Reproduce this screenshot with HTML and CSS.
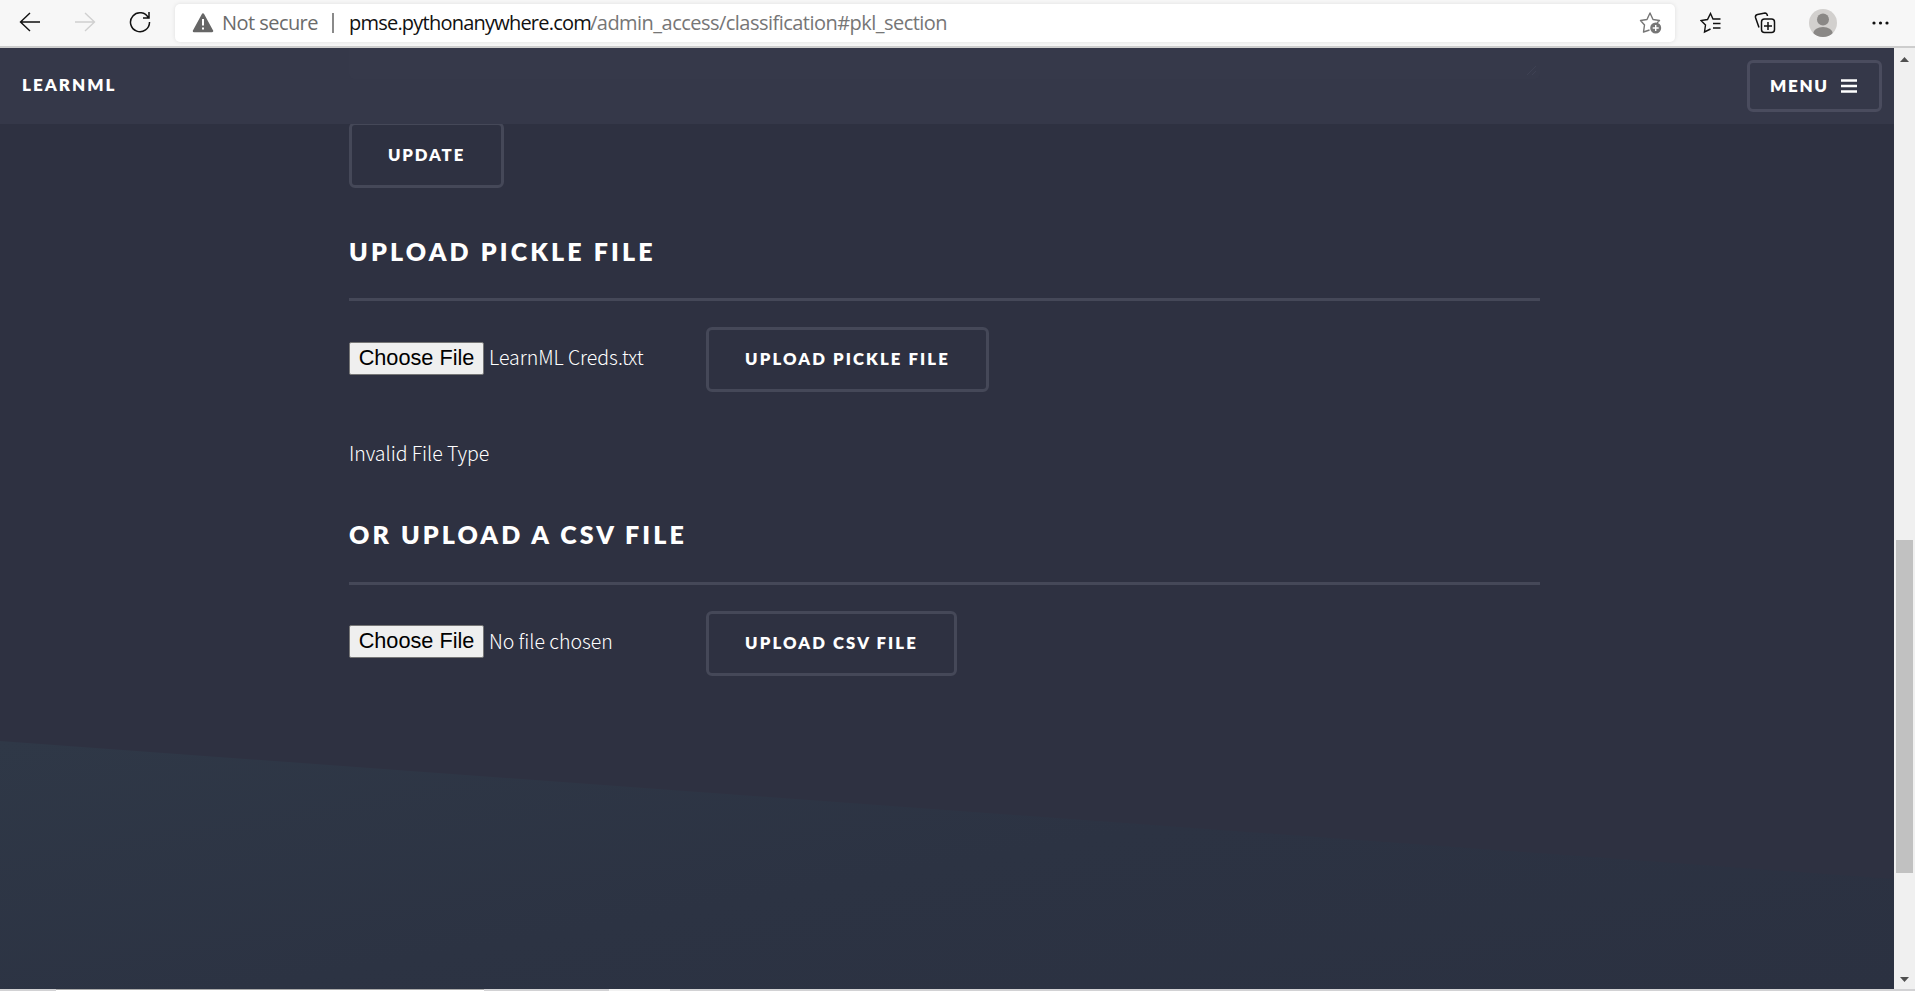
FILE: index.html
```html
<!DOCTYPE html>
<html lang="en">
<head>
<meta charset="utf-8">
<title>LearnML</title>
<link rel="stylesheet" href="styles.css">
</head>
<body>
<div class="toolbar">
  <div class="nav">
    <svg class="icon" width="22" height="22" viewBox="0 0 22 22"><path d="M21 11H1.500M11 2 1.500 11 11 20" stroke="#111" stroke-width="1.400"/></svg>
    <svg class="icon" width="22" height="22" viewBox="0 0 22 22"><path d="M1 11h19.500M11 2l9.500 9L11 20" stroke="#d0d0d0" stroke-width="1.400"/></svg>
    <svg class="icon" width="22" height="22" viewBox="0 0 22 22"><path d="M19.500 7A9.500 9.500 0 1 0 20.500 11M20 1v6h-6" stroke="#111" stroke-width="1.500"/></svg>
  </div>
  <div class="address">
    <svg class="warn" width="22" height="20" viewBox="0 0 22 20"><path d="M11 1.500 20 18H2Z" fill="#666" stroke="#666" stroke-width="2.500" stroke-linejoin="round"/><path d="M11 6v6.500M11 14.500v2" stroke="#fff" stroke-width="2"/></svg>
    <span class="insecure">Not secure</span>
    <span class="divider"></span>
    <span class="host">pmse.pythonanywhere.com</span><span class="path">/admin_access/classification#pkl_section</span>
    <svg class="icon favorite" width="24" height="24" viewBox="0 0 24 24"><path d="M10.500 19 4.500 21l1-7L1.500 9.500l6.500-1L11 2l3 6.500 6.500 1L18 12" stroke="#767676" stroke-width="1.400" stroke-linejoin="round"/><circle cx="16.700" cy="17" r="5.500" fill="#767676"/><path d="M16.700 14v6M13.700 17h6" stroke="#fff" stroke-width="1.400"/></svg>
  </div>
  <div class="tools">
    <svg class="icon" width="22" height="22" viewBox="0 0 22 22"><path d="M10.500 17 4.500 20l1-7L1 8.500l6.500-1L10.500 1.500l2.500 5.500H20.500M13 11.500h7.500M13 16h7.500" stroke="#111" stroke-width="1.400"/></svg>
    <svg class="icon" width="22" height="22" viewBox="0 0 22 22"><rect x="7.500" y="7" width="13" height="13.500" rx="3" stroke="#111" stroke-width="1.500"/><path d="M14 10v8M10 14h8M5 15.500 1.500 5.500Q1 3 3.500 2.500L11 1q2 0 2.500 3" stroke="#111" stroke-width="1.500"/></svg>
    <svg class="avatar" width="28" height="28" viewBox="0 0 28 28"><clipPath id="disc"><circle cx="14" cy="14" r="14"/></clipPath><g clip-path="url(#disc)"><rect width="28" height="28" fill="#d2d0ce"/><g fill="#8a8886"><circle cx="14" cy="10.500" r="6"/><ellipse cx="14" cy="25" rx="10" ry="7"/></g></g></svg>
    <svg class="icon" width="18" height="6" viewBox="0 0 18 6"><g fill="#111"><circle cx="3" cy="3" r="1.600"/><circle cx="9.500" cy="3" r="1.600"/><circle cx="16" cy="3" r="1.600"/></g></svg>
  </div>
</div>
<div class="viewport">
  <div class="page">
    <header class="header">
      <a class="logo">LearnML</a>
      <div class="ghost"><svg width="10" height="10" viewBox="0 0 10 10"><path d="M0 9 9 0M5 9l4-4" stroke="#3e4153" fill="none"/></svg></div>
      <a class="menu">Menu<svg width="16" height="14" viewBox="0 0 16 14"><path d="M0 1.500h16M0 7h16M0 12.500h16" stroke="#fff" stroke-width="2.600"/></svg></a>
    </header>
    <main class="content">
      <a class="button update">Update</a>
      <h4 class="title first">Upload Pickle File</h4>
      <div class="row">
        <div class="file"><span class="choose">Choose File</span><span class="name">LearnML Creds.txt</span></div>
        <a class="button pickle">Upload Pickle File</a>
      </div>
      <p class="message">Invalid File Type</p>
      <h4 class="title second">Or Upload a CSV File</h4>
      <div class="row">
        <div class="file file-csv"><span class="choose">Choose File</span><span class="name">No file chosen</span></div>
        <a class="button csv">Upload CSV File</a>
      </div>
    </main>
    <div class="wedge"></div>
  </div>
  <div class="scrollbar">
    <svg width="9" height="5" viewBox="0 0 9 5"><path d="M0 5 4.500 0 9 5Z" fill="#505050"/></svg>
    <div class="thumb"></div>
    <svg width="9" height="5" viewBox="0 0 9 5"><path d="M0 0h9L4.500 5Z" fill="#505050"/></svg>
  </div>
</div>
<div class="taskbar"><span class="search"></span><span class="task"></span></div>
</body>
</html>
```

FILE: styles.css
```css
* { box-sizing: border-box; }
body {
  margin: 0;
  width: 1915px;
  height: 991px;
  overflow: hidden;
  display: flex;
  flex-direction: column;
  background: #2e3141;
}
svg { flex: none; display: block; }
.icon { fill: none; }
.toolbar {
  height: 48px;
  flex: none;
  display: flex;
  align-items: flex-start;
  background: #f7f7f7;
  border-bottom: 2px solid #cdcdcd;
}
.nav { display: flex; gap: 33px; padding: 11px 0 0 19px; width: 175px; }
.address {
  width: 1500px;
  height: 38px;
  margin-top: 4px;
  padding-left: 17px;
  display: flex;
  align-items: center;
  background: #fff;
  border-radius: 5px;
  box-shadow: 0 0 4px rgba(0, 0, 0, .1);
  font: 20px/38px "Open Sans", sans-serif;
  white-space: pre;
}
.insecure { width: 110px; margin-left: 8px; color: #6b6b6b; letter-spacing: -.55px; }
.divider { width: 2px; height: 20px; background: #8a8a8a; }
.host { width: 241px; margin-left: 15px; color: #111; letter-spacing: -.78px; }
.path { color: #767676; letter-spacing: -.53px; }
.favorite { margin-left: auto; margin-right: 12px; }
.tools { display: flex; align-items: center; height: 46px; padding-left: 25px; }
.tools svg:nth-child(2) { margin-left: 32px; }
.tools svg:nth-child(3) { margin-left: 33px; }
.tools svg:nth-child(4) { margin-left: 34px; }
.viewport { height: 941px; display: flex; }
.page {
  width: 1894px;
  display: flex;
  flex-direction: column;
  background: #2e3141;
  color: #fff;
}
.header {
  position: relative;
  z-index: 1;
  height: 76px;
  flex: none;
  display: flex;
  background: #353849;
}
.logo, .menu, .button, .title {
  font-family: Lato, sans-serif;
  font-weight: 800;
  text-transform: uppercase;
  white-space: nowrap;
}
.logo { width: 327px; padding-left: 22px; font-size: 17px; line-height: 73px; letter-spacing: 2px; }
.ghost {
  width: 1191px;
  height: 31px;
  margin-left: 22px;
  display: flex;
  justify-content: flex-end;
  align-items: flex-end;
  padding: 0 3px 3px 0;
  border-radius: 0 0 5px 5px;
  background: #36394a;
}
.menu {
  width: 135px;
  height: 52px;
  margin: 12px 12px 0 auto;
  padding: 0 0 2px 20px;
  display: flex;
  align-items: center;
  gap: 12px;
  border: 3px solid #4a4c5e;
  border-radius: 6px;
  font-size: 17px;
  letter-spacing: 1.7px;
}
.menu svg { margin-top: 1px; }
.content { width: 1191px; height: 570px; margin-left: 349px; }
.button {
  height: 65px;
  padding-bottom: 2px;
  display: flex;
  align-items: center;
  justify-content: center;
  border: 3px solid #454858;
  border-radius: 6px;
  font-size: 16.7px;
  letter-spacing: 2.11px;
}
.update { width: 155px; height: 66px; margin-top: -2px; padding-bottom: 0; letter-spacing: 1.9px; }
.pickle { width: 283px; }
.csv { width: 251px; }
.title {
  margin: 0;
  height: 113px;
  padding-top: 48px;
  border-bottom: 3px solid #454858;
  font-size: 25px;
  line-height: 30px;
  letter-spacing: 3.15px;
}
.row { display: flex; margin-top: 26px; }
.file { width: 357px; padding-bottom: 2px; display: flex; align-items: center; }
.file-csv { padding-bottom: 4px; }
.choose {
  width: 135px;
  height: 33px;
  border: 1px solid #767676;
  border-radius: 2px;
  background: #efefef;
  color: #000;
  font: 21.7px/30px "Liberation Sans", sans-serif;
  text-align: center;
}
.name, .message { font: 300 19.5px/30px "Noto Sans CJK SC", sans-serif; letter-spacing: -.03px; white-space: nowrap; }
.name { margin-left: 5px; padding-bottom: 4px; }
.file-csv .name { padding-bottom: 2px; }
.message { margin: 46px 0 0; height: 30px; }
.second { height: 117px; padding-top: 51px; letter-spacing: 3.1px; }
.wedge {
  flex: 1;
  margin-top: 47px;
  background: linear-gradient(170deg, #2f3847, #2c3343 50%, #2b3141);
  clip-path: polygon(0 0, 100% 138px, 100% 100%, 0 100%);
}
.scrollbar {
  width: 21px;
  display: flex;
  flex-direction: column;
  align-items: center;
  padding: 9px 0 7px;
  background: #f0f0f0;
}
.thumb { width: 17px; height: 333px; margin: 478px 0 auto; background: #c1c1c1; }
.taskbar { height: 2px; display: flex; background: #d2d2d4; }
.search { width: 428px; margin-left: 56px; background: #fff; border-top: 1px solid #aaa; }
.task { width: 61px; margin-left: 125px; background: #f2f2f2; }
```
